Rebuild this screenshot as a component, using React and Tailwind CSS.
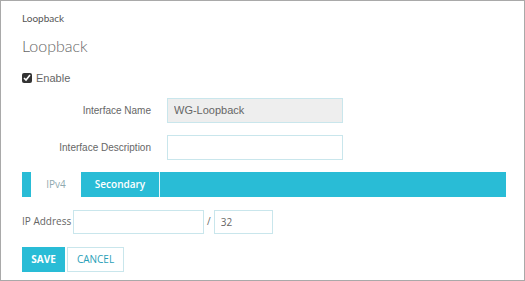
import React, { useState } from 'react';

function App() {
  const [enabled, setEnabled] = useState(true);
  const [tab, setTab] = useState('ipv4');

  return (
    <div className="w-[525px] h-[281px] bg-white border border-[#a9a9a9] relative overflow-hidden">
      <div className="pl-[21px] pt-[10px]">
        <div className="text-[10px] text-[#555] font-['Lato',sans-serif] leading-[14px]">Loopback</div>
        <h1 className="mt-[11px] text-[16px] text-[#666] font-['Lato',sans-serif] font-light leading-[20px]">Loopback</h1>

        <label className="mt-[14px] flex items-center gap-[4px] text-[11px] text-[#666] font-['Liberation_Sans',sans-serif]">
          <input
            type="checkbox"
            checked={enabled}
            onChange={(e) => setEnabled(e.target.checked)}
            className="w-[10px] h-[10px] m-0 accent-[#333]"
          />
          Enable
        </label>

        <div className="mt-[11px] flex items-center">
          <div className="w-[129px] text-right text-[10px] text-[#666] font-['Liberation_Sans',sans-serif]">Interface Name</div>
          <input
            readOnly
            value="WG-Loopback"
            className="ml-[16px] w-[176px] h-[25px] bg-[#eeeeee] border border-[#c9e6ec] px-[6px] text-[11px] text-[#666] font-['Liberation_Sans',sans-serif] outline-none"
          />
        </div>

        <div className="mt-[12px] flex items-center">
          <div className="w-[129px] text-right text-[10px] text-[#666] font-['Liberation_Sans',sans-serif]">Interface Description</div>
          <input
            className="ml-[16px] w-[176px] h-[25px] bg-white border border-[#c9e6ec] px-[6px] text-[11px] outline-none"
          />
        </div>

        <div className="mt-[12px] w-[484px] h-[25px] bg-[#29bcd6] flex pl-[9px] font-['Open_Sans',sans-serif] text-[10px]">
          <button
            onClick={() => setTab('ipv4')}
            className={tab === 'ipv4' ? 'w-[50px] h-full bg-white text-[#8fa9b0]' : 'w-[50px] h-full text-white font-semibold'}
          >
            IPv4
          </button>
          <button
            onClick={() => setTab('secondary')}
            className={tab === 'secondary' ? 'w-[78px] h-full bg-white text-[#8fa9b0]' : 'w-[78px] h-full text-white font-semibold'}
          >
            Secondary
          </button>
          <div className="w-[1px] h-full bg-[#e6f7fa]"></div>
        </div>

        <div className="mt-[13px] flex items-center font-['Open_Sans',sans-serif] text-[10px] text-[#666]">
          <span className="w-[51px]">IP Address</span>
          <input className="w-[131px] h-[24px] border border-[#c9e6ec] px-[6px] outline-none" />
          <span className="mx-[3px]">/</span>
          <input
            defaultValue="32"
            className="w-[59px] h-[24px] border border-[#c9e6ec] px-[6px] text-[10px] text-[#666] outline-none"
          />
        </div>

        <div className="mt-[13px] flex gap-[2px] font-['Open_Sans',sans-serif] text-[10px]">
          <button className="w-[43px] h-[25px] bg-[#29bcd6] text-white font-bold">SAVE</button>
          <button className="w-[57px] h-[25px] bg-white border border-[#c9e6ec] text-[#29a0b8]">CANCEL</button>
        </div>
      </div>
    </div>
  );
}

export default App;
